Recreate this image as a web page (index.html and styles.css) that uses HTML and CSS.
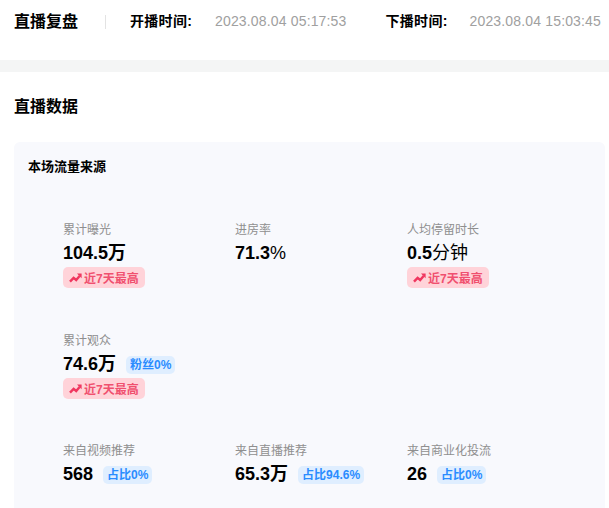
FILE: index.html
```html
<!DOCTYPE html>
<html lang="zh">
<head>
<meta charset="utf-8">
<title>直播复盘</title>
<link rel="stylesheet" href="styles.css">
</head>
<body>
<svg class="defs" width="0" height="0" aria-hidden="true"><defs>
<symbol id="trend" viewBox="0 0 13 10"><path d="M1 8.6 4.6 4.8l2.6 2.2 3.4-4" fill="none" stroke="#f0365f" stroke-width="2.4"/><path d="M8 .6h4.6v4.6Z" fill="#f0365f"/></symbol>
</defs></svg>
<header class="top">
  <h1 class="top-title">直播复盘</h1>
  <span class="top-sep"></span>
  <span class="time-label">开播时间:</span>
  <span class="time-value">2023.08.04 05:17:53</span>
  <span class="time-label second">下播时间:</span>
  <span class="time-value last">2023.08.04 15:03:45</span>
</header>
<div class="band"></div>
<main class="main">
  <h2 class="section-title">直播数据</h2>
  <section class="card">
    <h3 class="card-title">本场流量来源</h3>
    <div class="grid">
      <div class="stat">
        <div class="stat-label">累计曝光</div>
        <div class="stat-value">104.5<span class="unit">万</span></div>
        <div class="hot"><svg class="hot-icon"><use href="#trend"/></svg>近7天最高</div>
      </div>
      <div class="stat">
        <div class="stat-label">进房率</div>
        <div class="stat-value">71.3<span class="unit-light">%</span></div>
      </div>
      <div class="stat">
        <div class="stat-label">人均停留时长</div>
        <div class="stat-value">0.5<span class="unit-light">分钟</span></div>
        <div class="hot"><svg class="hot-icon"><use href="#trend"/></svg>近7天最高</div>
      </div>
      <div class="stat row-two">
        <div class="stat-label">累计观众</div>
        <div class="stat-value">74.6<span class="unit">万</span><span class="pill">粉丝0%</span></div>
        <div class="hot"><svg class="hot-icon"><use href="#trend"/></svg>近7天最高</div>
      </div>
      <div class="stat row-three">
        <div class="stat-label">来自视频推荐</div>
        <div class="stat-value">568<span class="pill">占比0%</span></div>
      </div>
      <div class="stat row-three">
        <div class="stat-label">来自直播推荐</div>
        <div class="stat-value">65.3<span class="unit">万</span><span class="pill">占比94.6%</span></div>
      </div>
      <div class="stat row-three">
        <div class="stat-label">来自商业化投流</div>
        <div class="stat-value">26<span class="pill">占比0%</span></div>
      </div>
    </div>
  </section>
</main>
</body>
</html>
```
FILE: styles.css
```css
* { box-sizing: border-box; }
html, body { margin: 0; padding: 0; }
body { width: 609px; height: 508px; overflow: hidden; background: #fff; color: #000; font-family: "Liberation Sans", "Noto Sans CJK SC", sans-serif; }
h1, h2, h3 { margin: 0; }
.defs { position: absolute; }
.top { display: flex; align-items: center; height: 60px; padding: 0 0 16px 14px; white-space: nowrap; }
.top-title { font-size: 16px; font-weight: 700; line-height: 44px; }
.top-sep { width: 1px; height: 14px; background: #e3e3e3; margin: 0 24px 0 27px; }
.time-label { font-size: 14px; font-weight: 700; width: 62px; letter-spacing: .3px; margin-bottom: 4px; }
.time-label.second { margin-left: 39px; }
.time-value { font-size: 14px; letter-spacing: .16px; color: #a0a0a0; margin: 0 0 2px 23px; }
.time-value.last { margin-left: 22px; }
.band { height: 12px; background: #f4f5f5; }
.main { padding: 0 4px 0 14px; }
.section-title { font-size: 16px; font-weight: 700; line-height: 22px; padding-top: 24px; }
.card { margin-top: 24px; height: 380px; background: #f8f9fd; border-radius: 6px; padding: 16px 14px 0; }
.card-title { font-size: 13px; font-weight: 700; line-height: 18px; }
.grid { display: grid; grid-template-columns: repeat(3, 172px); padding: 45px 0 0 35px; }
.stat { min-height: 110px; }
.stat:nth-child(-n+3) { min-height: 111px; }
.row-two { grid-column: 1 / -1; }
.row-three { min-height: 0; }
.stat-label { font-size: 12px; line-height: 18px; color: #8f8f8f; }
.stat-value { display: flex; align-items: center; font-size: 18px; font-weight: 700; line-height: 24px; height: 24px; margin-top: 2px; white-space: nowrap; }
.unit { font-size: 18px; }
.unit-light { font-size: 18px; font-weight: 400; }
.hot { display: inline-flex; align-items: center; height: 21px; margin-top: 2px; padding: 0 6px; border-radius: 5px; background: #ffd3d9; color: #f0506f; font-size: 12px; font-weight: 700; }
.hot-icon { width: 13px; height: 10px; margin-right: 2px; }
.pill { display: inline-flex; align-items: center; height: 18px; margin: 2px 0 0 10px; padding: 0 4px; border-radius: 5px; background: #dfeeff; color: #2a8cff; font-size: 12px; font-weight: 700; line-height: 18px; }
```
